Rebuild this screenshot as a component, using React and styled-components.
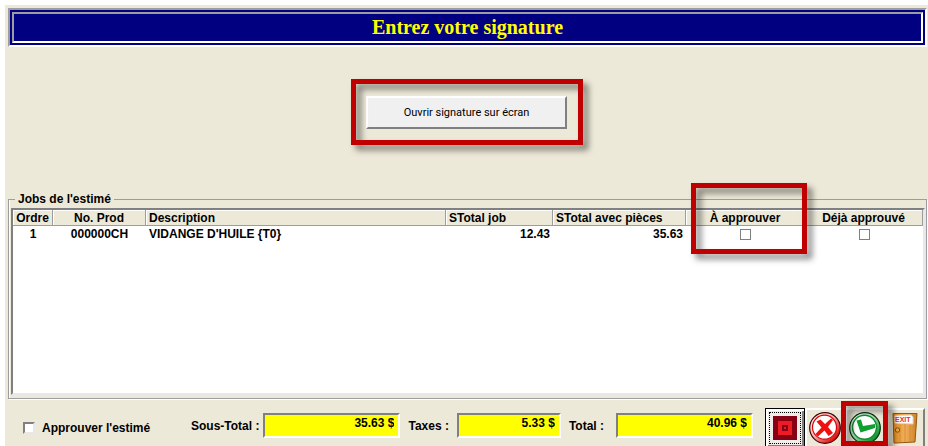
import React, { useState } from 'react'
import styled, { createGlobalStyle, css } from "styled-components"

const GlobalStyle=createGlobalStyle`
    *{
        box-sizing:border-box;
    }
    body{
        margin:0;
        background:#fff;
        overflow:hidden;
        color:#000;
        font:bold 12px/16px "Liberation Sans", Arial, sans-serif;
    }
`;

const face="#ece9d8";

const sunken=css`
    border:2px solid;
    border-color:#9d9da1 #fff #fff #9d9da1;
`;

const Page=styled.main`
    display:flex;
    flex-direction:column;
    min-height:100vh;
    margin-left:5px;
    border-top:5px solid #fff;
    padding:3px 1px 0 3px;
    background:${face};
`;

const Banner=styled.header`
    ${sunken}
    padding:2px;
    background:#000080;
`;

const Title=styled.h1`
    ${sunken}
    margin:0;
    font:bold 20px/27px "Liberation Serif", "Times New Roman", serif;
    text-align:center;
    color:#ffff00;
`;

const Highlight=styled.div`
    position:relative;
    &::after{
        content:"";
        position:absolute;
        inset:${({inset})=>inset};
        border:5px solid #c00000;
        filter:drop-shadow(5px 5px 3px rgba(0,0,0,0.5));
        pointer-events:none;
    }
`;

const SignArea=styled.section`
    display:flex;
    justify-content:center;
    padding:49px 2px 62px 0;
`;

const SignButton=styled.button`
    width:201px;
    height:33px;
    border:2px solid;
    border-color:#fff #808080 #808080 #fff;
    border-radius:0;
    background:#f0f0f0;
    color:#000;
    font:11px/16px Roboto, Arial, sans-serif;
`;

const Jobs=styled.fieldset`
    display:flex;
    flex-direction:column;
    min-width:0;
    margin:0;
    padding:1px 1px 3px;
    border:1px solid #9d9da1;
    box-shadow:1px 1px #fff, inset 1px 0 #fff;
`;

const Legend=styled.legend`
    margin-left:5px;
    padding:0 3px;
    background:${face};
`;

const List=styled.div`
    height:187px;
    margin-left:1px;
    border:2px solid;
    border-color:#808080 #e8e8e8 #e8e8e8 #808080;
    background:#fff;
`;

const Table=styled.table`
    width:100%;
    table-layout:fixed;
    border-collapse:separate;
    border-spacing:0;
`;

const Head=styled.th`
    width:${({w})=>w};
    height:16px;
    padding:1px 3px 0;
    border-right:1px solid #9d9da1;
    border-bottom:1px solid #9d9da1;
    background:${face};
    box-shadow:inset 1px 1px #fff;
    line-height:14px;
    text-align:${({align})=>align || "left"};
    white-space:nowrap;
`;

const Cell=styled.td`
    height:16px;
    padding:0 3px;
    text-align:${({align})=>align || "left"};
    white-space:nowrap;
`;

const RowCheck=styled.input`
    appearance:none;
    display:block;
    width:11px;
    height:11px;
    margin:0 auto;
    border:1px solid #808080;
    background:#fff;
    &:checked{
        background:#000;
        box-shadow:inset 0 0 0 2px #fff;
    }
`;

const Footer=styled.footer`
    display:flex;
    align-items:flex-start;
    padding:9px 2px 0 15px;
`;

const Approve=styled.label`
    display:flex;
    align-items:center;
    gap:7px;
    width:168px;
    margin-top:12px;
`;

const ApproveCheck=styled.input`
    appearance:none;
    width:12px;
    height:12px;
    margin:0;
    border:2px solid;
    border-color:#808080 #e8e8e8 #e8e8e8 #808080;
    background:#fff;
    &:checked{
        background:#000;
    }
`;

const Amounts=styled.div`
    display:flex;
    gap:8px;
    margin-top:5px;
`;

const Amount=styled.label`
    display:flex;
    align-items:center;
    gap:${({gap})=>gap};
    white-space:nowrap;
`;

const Field=styled.input`
    width:${({w})=>w};
    height:25px;
    padding:0 4px 5px;
    border:2px solid;
    border-color:#808080 #fff #fff #808080;
    border-radius:0;
    background:#ffff00;
    color:#000;
    font:inherit;
    text-align:right;
`;

const Tools=styled.div`
    display:flex;
    margin-left:auto;
`;

const Tool=styled.button`
    display:grid;
    place-items:center;
    width:40px;
    height:40px;
    padding:0;
    border:2px solid;
    border-color:#fff #808080 #808080 #fff;
    border-radius:0;
    background:${face};
    ${({focused})=>focused && css`
        border:1px solid #000;
        background:#f0ece8;
        box-shadow:inset 2px 2px #fff, inset -2px -2px #808080;
        outline:1px dotted #000;
        outline-offset:-5px;
    `}
    ${({plain})=>plain && css`
        border-right-color:${face};
    `}
`;

const Stamp=()=>(
    <svg width="24" height="24" viewBox="0 0 24 24">
        <path fill="#880015" d="M0 0h24v24H0z"/>
        <path fill="#ed1c24" d="M5 5h14v14H5z"/>
        <path fill="#880015" d="M9 9h6v6H9z"/>
        <path fill="#ed1c24" d="M11 11h2v2h-2z"/>
    </svg>
)

const Cancel=()=>(
    <svg width="32" height="32" viewBox="0 0 32 32">
        <defs>
            <linearGradient id="redRim" x1="0" y1="0" x2="1" y2="1">
                <stop offset="0" stopColor="#fff"/>
                <stop offset="0.45" stopColor="#f8b0b0"/>
                <stop offset="0.85" stopColor="#e00808"/>
            </linearGradient>
        </defs>
        <circle cx="16" cy="16" r="15.300" fill="url(#redRim)" stroke="#400" strokeWidth="1.2"/>
        <circle cx="15.5" cy="15.200" r="12" fill="#fff" stroke="#d80808" strokeWidth="1.2"/>
        <path fill="#f01010" d="M7.500 9.500L11.500 7.500l4.500 4.500 6-5.500 2 1.500-5 7 5 6-4.500 3-4-5.500-6.500 6-2.500-2.500 6-6.500z"/>
    </svg>
)

const Accept=()=>(
    <svg width="32" height="32" viewBox="0 0 32 32">
        <defs>
            <linearGradient id="greenRim" x1="0" y1="0" x2="1" y2="1">
                <stop offset="0" stopColor="#fff"/>
                <stop offset="0.45" stopColor="#a8dcb0"/>
                <stop offset="0.85" stopColor="#089028"/>
            </linearGradient>
        </defs>
        <circle cx="16" cy="16" r="15.300" fill="url(#greenRim)" stroke="#043010" strokeWidth="1.2"/>
        <circle cx="15.5" cy="15.200" r="12" fill="#fff" stroke="#109030" strokeWidth="1.5"/>
        <path fill="#10a030" d="M7.500 8.500l4.500-1 2 6.500 12-2v4l-14.500 4.500z"/>
    </svg>
)

const Exit=()=>(
    <svg width="26" height="32" viewBox="0 0 26 32">
        <defs>
            <linearGradient id="wood">
                <stop offset="0" stopColor="#e08818"/>
                <stop offset="0.5" stopColor="#f0b060"/>
                <stop offset="1" stopColor="#d08020"/>
            </linearGradient>
        </defs>
        <path fill="url(#wood)" stroke="#905810" d="M1 1.500h24l-2 28.500-19 1H2z"/>
        <path stroke="#d88c30" d="M8 13v17M13 12v18M18 12v18"/>
        <path fill="#fff" stroke="#e0d8d0" d="M3 4l16-1 2 2v7l-18-1z"/>
        <text x="3" y="10" fontSize="7" fontWeight="bold" fill="#e82838">EXIT</text>
        <circle cx="5.500" cy="18" r="2.200" fill="#f0a840" stroke="#805010"/>
    </svg>
)

const jobs=[
    {ordre:1,prod:"000000CH",description:"VIDANGE D'HUILE {T0}",total:"12.43",totalPieces:"35.63"},
]

const App = () => {
    const [approved,setApproved]=useState(false)

  return (
    <>
        <GlobalStyle/>
        <Page>
            <Banner>
                <Title>Entrez votre signature</Title>
            </Banner>
            <SignArea>
                <Highlight inset="-17px -16px -16px -15px">
                    <SignButton type="button">Ouvrir signature sur écran</SignButton>
                </Highlight>
            </SignArea>
            <Jobs>
                <Legend>Jobs de l'estimé</Legend>
                <List>
                    <Table>
                        <thead>
                            <tr>
                                <Head w="40px" align="center">Ordre</Head>
                                <Head w="93px" align="center">No. Prod</Head>
                                <Head>Description</Head>
                                <Head w="107px">STotal job</Head>
                                <Head w="133px">STotal avec pièces</Head>
                                <Head w="119px" align="center">
                                    <Highlight inset="-28px -6px -29px 2px">À approuver</Highlight>
                                </Head>
                                <Head w="118px" align="center">Déjà approuvé</Head>
                            </tr>
                        </thead>
                        <tbody>
                            {jobs.map(job=>(
                                <tr key={job.ordre}>
                                    <Cell align="center">{job.ordre}</Cell>
                                    <Cell align="center">{job.prod}</Cell>
                                    <Cell>{job.description}</Cell>
                                    <Cell align="right">{job.total}</Cell>
                                    <Cell align="right">{job.totalPieces}</Cell>
                                    <Cell><RowCheck type="checkbox" aria-label="À approuver"/></Cell>
                                    <Cell><RowCheck type="checkbox" aria-label="Déjà approuvé"/></Cell>
                                </tr>
                            ))}
                        </tbody>
                    </Table>
                </List>
            </Jobs>
            <Footer>
                <Approve>
                    <ApproveCheck type="checkbox" checked={approved} onChange={e=>setApproved(e.target.checked)}/>
                    Approuver l'estimé
                </Approve>
                <Amounts>
                    <Amount gap="4px">Sous-Total : <Field w="137px" readOnly value="35.63 $"/></Amount>
                    <Amount gap="8px">Taxes : <Field w="104px" readOnly value="5.33 $"/></Amount>
                    <Amount gap="12px">Total : <Field w="137px" readOnly value="40.96 $"/></Amount>
                </Amounts>
                <Tools>
                    <Tool type="button" focused aria-label="Signature"><Stamp/></Tool>
                    <Tool type="button" plain aria-label="Annuler"><Cancel/></Tool>
                    <Highlight inset="-7px -3px 2px -4px">
                        <Tool type="button" plain aria-label="Accepter"><Accept/></Tool>
                    </Highlight>
                    <Tool type="button" aria-label="Quitter"><Exit/></Tool>
                </Tools>
            </Footer>
        </Page>
    </>
  )
}

export default App
